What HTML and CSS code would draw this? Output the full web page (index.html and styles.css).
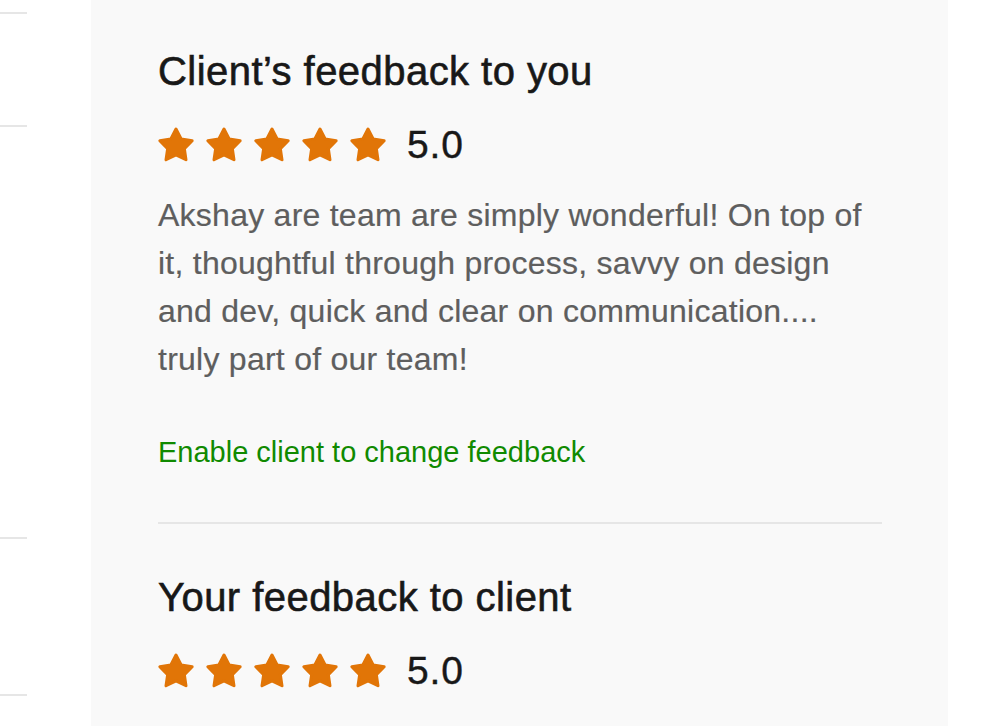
FILE: index.html
```html
<!DOCTYPE html>
<html>
<head>
<meta charset="utf-8">
<link rel="stylesheet" href="styles.css">
</head>
<body>
<div class="page">
  <aside class="side">
    <div class="side-item s1"></div>
    <div class="side-item s2"></div>
    <div class="side-item s3"></div>
    <div class="side-item s4"></div>
  </aside>
  <main class="panel">
    <section class="block">
      <h2 class="title">Client’s feedback to you</h2>
      <div class="rating">
        <div class="stars">
          <svg class="star" viewBox="0 0 36 36"><polygon points="18,2 23.17,11.88 34.17,13.75 26.37,21.72 27.99,32.75 18,27.8 8.01,32.75 9.63,21.72 1.83,13.75 12.83,11.88"/></svg>
          <svg class="star" viewBox="0 0 36 36"><polygon points="18,2 23.17,11.88 34.17,13.75 26.37,21.72 27.99,32.75 18,27.8 8.01,32.75 9.63,21.72 1.83,13.75 12.83,11.88"/></svg>
          <svg class="star" viewBox="0 0 36 36"><polygon points="18,2 23.17,11.88 34.17,13.75 26.37,21.72 27.99,32.75 18,27.8 8.01,32.75 9.63,21.72 1.83,13.75 12.83,11.88"/></svg>
          <svg class="star" viewBox="0 0 36 36"><polygon points="18,2 23.17,11.88 34.17,13.75 26.37,21.72 27.99,32.75 18,27.8 8.01,32.75 9.63,21.72 1.83,13.75 12.83,11.88"/></svg>
          <svg class="star" viewBox="0 0 36 36"><polygon points="18,2 23.17,11.88 34.17,13.75 26.37,21.72 27.99,32.75 18,27.8 8.01,32.75 9.63,21.72 1.83,13.75 12.83,11.88"/></svg>
        </div>
        <span class="score">5.0</span>
      </div>
      <p class="comment">Akshay are team are simply wonderful! On top of it, thoughtful through process, savvy on design and dev, quick and clear on communication.... truly part of our team!</p>
      <a class="link" href="#">Enable client to change feedback</a>
    </section>
    <hr class="divider">
    <section class="block">
      <h2 class="title title2">Your feedback to client</h2>
      <div class="rating">
        <div class="stars">
          <svg class="star" viewBox="0 0 36 36"><polygon points="18,2 23.17,11.88 34.17,13.75 26.37,21.72 27.99,32.75 18,27.8 8.01,32.75 9.63,21.72 1.83,13.75 12.83,11.88"/></svg>
          <svg class="star" viewBox="0 0 36 36"><polygon points="18,2 23.17,11.88 34.17,13.75 26.37,21.72 27.99,32.75 18,27.8 8.01,32.75 9.63,21.72 1.83,13.75 12.83,11.88"/></svg>
          <svg class="star" viewBox="0 0 36 36"><polygon points="18,2 23.17,11.88 34.17,13.75 26.37,21.72 27.99,32.75 18,27.8 8.01,32.75 9.63,21.72 1.83,13.75 12.83,11.88"/></svg>
          <svg class="star" viewBox="0 0 36 36"><polygon points="18,2 23.17,11.88 34.17,13.75 26.37,21.72 27.99,32.75 18,27.8 8.01,32.75 9.63,21.72 1.83,13.75 12.83,11.88"/></svg>
          <svg class="star" viewBox="0 0 36 36"><polygon points="18,2 23.17,11.88 34.17,13.75 26.37,21.72 27.99,32.75 18,27.8 8.01,32.75 9.63,21.72 1.83,13.75 12.83,11.88"/></svg>
        </div>
        <span class="score">5.0</span>
      </div>
    </section>
  </main>
  <div class="right"></div>
</div>
</body>
</html>
```
FILE: styles.css
```css
* { box-sizing: border-box; }
html, body { margin: 0; padding: 0; background: #ffffff; }
body {
  font-family: "Liberation Sans", Arial, sans-serif;
  width: 988px;
  height: 726px;
  overflow: hidden;
}
.page {
  display: flex;
  height: 726px;
}
.side {
  width: 91px;
  flex: 0 0 91px;
  display: flex;
  flex-direction: column;
}
.side-item {
  width: 27px;
  border-bottom: 2px solid #e6e6e6;
}
.s1 { height: 14px; }
.s2 { height: 113px; }
.s3 { height: 412px; }
.s4 { height: 157px; }
.panel {
  width: 857px;
  flex: 0 0 857px;
  background: #f9f9f9;
  padding: 47px 66px 0 67px;
}
.right { flex: 1; }
.block { display: flex; flex-direction: column; align-items: flex-start; }
.title {
  margin: 0;
  font-size: 40px;
  line-height: 48px;
  font-weight: 400;
  color: #181818;
  letter-spacing: 0.45px;
  -webkit-text-stroke: 0.6px #181818;
}
.rating {
  margin-top: 32px;
  display: flex;
  align-items: center;
  height: 36px;
}
.stars { display: flex; gap: 12px; }
.star {
  width: 36px;
  height: 36px;
  display: block;
  overflow: visible;
}
.star polygon {
  fill: #e17507;
  stroke: #e17507;
  stroke-width: 3;
  stroke-linejoin: round;
}
.score {
  margin-left: 21px;
  font-size: 39px;
  line-height: 36px;
  letter-spacing: 0.8px;
  color: #181818;
  -webkit-text-stroke: 0.4px #181818;
}
.comment {
  margin: 28px 0 0;
  font-size: 32px;
  line-height: 48px;
  color: #5e5e5e;
  letter-spacing: 0.25px;
  max-width: 724px;
  -webkit-text-stroke: 0.2px #5e5e5e;
}
.link {
  margin-top: 49px;
  font-size: 29px;
  line-height: 40px;
  color: #108a00;
  text-decoration: none;
}
.divider {
  margin: 50px 0 0;
  border: 0;
  height: 2px;
  background: #e6e6e6;
  width: 100%;
}
.title2 { margin-top: 49px; }
```
